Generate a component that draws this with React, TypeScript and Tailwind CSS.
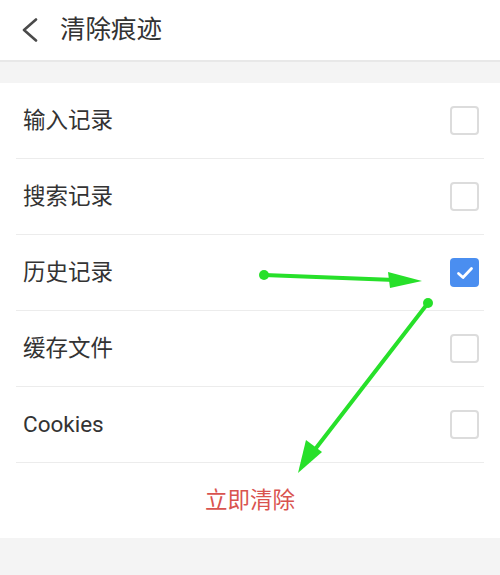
const ITEMS: readonly { label: string; checked: boolean }[] = [
  { label: "输入记录", checked: false },
  { label: "搜索记录", checked: false },
  { label: "历史记录", checked: true },
  { label: "缓存文件", checked: false },
  { label: "Cookies", checked: false },
];

const FONT = "font-['Roboto','Noto_Sans_CJK_SC',sans-serif]";

export default function App() {
  return (
    <div className={`relative h-[575px] w-[500px] overflow-hidden bg-[#f4f4f4] ${FONT}`}>
      {/* Top bar */}
      <header className="flex h-[62px] items-center border-b-2 border-[#e8e8e8] bg-white">
        <svg className="ml-[21px] h-[24px] w-[18px]" viewBox="0 0 18 24" fill="none" aria-hidden="true">
          <polyline
            points="15,1.5 3,12 15,22.5"
            stroke="#4a4a4a"
            strokeWidth="2.6"
            strokeLinecap="round"
            strokeLinejoin="round"
          />
        </svg>
        <h1 className="ml-[21px] text-[25.5px] leading-none text-[#333]">清除痕迹</h1>
      </header>

      {/* Options list */}
      <div className="mt-[21px] bg-white">
        {ITEMS.map((item) => (
          <div key={item.label} className="px-4">
            <div className="flex h-[76px] items-center justify-between border-b border-[#ececec] pl-[7px] pr-[5px]">
              <span className="text-[22.5px] text-[#333]">{item.label}</span>
              {item.checked ? (
                <span className="flex h-[29px] w-[29px] items-center justify-center rounded-[4px] bg-[#4a8ef0]">
                  <svg className="h-[16px] w-[18px]" viewBox="0 0 18 16" fill="none" aria-hidden="true">
                    <polyline
                      points="2.5,8.5 7,12.5 15.5,3.5"
                      stroke="#fff"
                      strokeWidth="2.8"
                      strokeLinecap="round"
                      strokeLinejoin="round"
                    />
                  </svg>
                </span>
              ) : (
                <span className="h-[29px] w-[29px] rounded-[4px] border-2 border-[#dcdcdc]" />
              )}
            </div>
          </div>
        ))}
        <div className="flex h-[75px] items-center justify-center">
          <span className="text-[22.5px] text-[#d9534f]">立即清除</span>
        </div>
      </div>

      {/* Green annotation arrows */}
      <svg
        aria-hidden="true"
        className="pointer-events-none absolute inset-0"
        width="500"
        height="575"
        viewBox="0 0 500 575"
      >
        <g fill="#27e02a" stroke="#27e02a" strokeLinecap="round">
          <line x1="264" y1="275" x2="395" y2="280" strokeWidth="4" />
          <circle cx="264" cy="275" r="5" stroke="none" />
          <polygon points="422,281 388,272 390,288" stroke="none" />
          <line x1="428" y1="303" x2="313" y2="452" strokeWidth="4" />
          <circle cx="428" cy="303" r="5" stroke="none" />
          <polygon points="298,473 306,440 322,452" stroke="none" />
        </g>
      </svg>
    </div>
  );
}
